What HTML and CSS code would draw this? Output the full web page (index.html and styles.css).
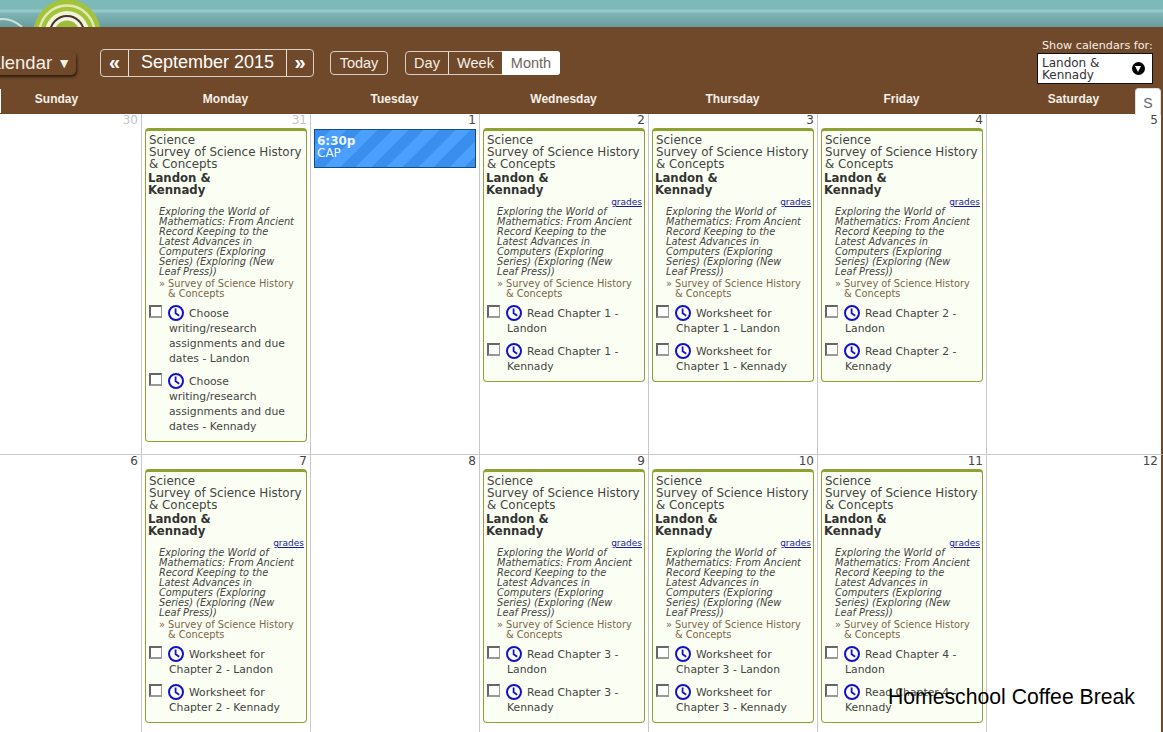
FILE: index.html
```html
<!DOCTYPE html>
<html lang="en">
<head>
<meta charset="utf-8">
<title>Calendar</title>
<link rel="stylesheet" href="styles.css">
</head>
<body>
<svg class="defs" width="0" height="0" aria-hidden="true">
  <symbol id="clock" viewBox="0 0 16 16">
    <circle cx="8" cy="8" r="7" fill="#fff" stroke="#1111cc" stroke-width="2"/>
    <path d="M7.6 3.6V8.2L11.2 10.8" fill="none" stroke="#1111cc" stroke-width="1.8"/>
  </symbol>
</svg>
<div class="page">
  <header class="banner">
    <svg class="logo" width="120" height="27" viewBox="0 0 120 27" aria-hidden="true">
      <path d="M-4 20C6 17 14 20 22 27" fill="none" stroke="#cfe0dc" stroke-width="2"/>
      <circle cx="67" cy="33" r="33.5" fill="#a4c339"/>
      <circle cx="67" cy="33" r="27.5" fill="none" stroke="#dfeab5" stroke-width="2.5"/>
      <circle cx="67" cy="33" r="22" fill="#eef4d6"/>
      <circle cx="67" cy="33" r="17" fill="#f2f2e6" stroke="#4a3426" stroke-width="2"/>
      <circle cx="67" cy="33" r="12.5" fill="#9dbb3a"/>
    </svg>
  </header>
  <section class="toolbar">
    <div class="cal-btn">Calendar <span class="cal-caret">▼</span></div>
    <div class="group nav-group">
      <span class="seg seg-arrow">«</span>
      <span class="seg seg-month">September 2015</span>
      <span class="seg seg-arrow seg-next">»</span>
    </div>
    <div class="group today-group"><span class="seg seg-small seg-today">Today</span></div>
    <div class="group view-group">
      <span class="seg seg-small seg-day">Day</span>
      <span class="seg seg-small seg-week">Week</span>
      <span class="seg seg-small seg-active">Month</span>
    </div>
    <div class="show-for">
      <div class="show-label">Show calendars for:</div>
      <div class="select">
        <span class="select-text">Landon &amp; Kennady</span>
        <span class="select-arrow"></span>
      </div>
    </div>
  </section>
  <div class="days">
    <div class="day">Sunday</div>
    <div class="day">Monday</div>
    <div class="day">Tuesday</div>
    <div class="day">Wednesday</div>
    <div class="day">Thursday</div>
    <div class="day">Friday</div>
    <div class="day">Saturday</div>
  </div>
  <span class="left-tick"></span>
  <span class="tab">S</span>
  <main class="grid">
    <div class="cell row-one"><div class="num muted">30</div></div>
    <div class="cell row-one">
      <div class="num muted">31</div>
      <article class="card">
        <div class="subject">Science<br>Survey of Science History &amp; Concepts</div>
        <div class="kids">Landon &amp; Kennady</div>
        <div class="book">Exploring the World of Mathematics: From Ancient Record Keeping to the Latest Advances in Computers (Exploring Series) (Exploring (New Leaf Press))</div>
        <div class="course">» Survey of Science History &amp; Concepts</div>
        <div class="task"><span class="check"></span><svg class="clock"><use href="#clock"/></svg>Choose writing/research assignments and due dates - Landon</div>
        <div class="task"><span class="check"></span><svg class="clock"><use href="#clock"/></svg>Choose writing/research assignments and due dates - Kennady</div>
      </article>
    </div>
    <div class="cell row-one">
      <div class="num">1</div>
      <div class="event"><b>6:30p</b><br>CAP</div>
    </div>
    <div class="cell row-one">
      <div class="num">2</div>
      <article class="card">
        <a class="grades" href="#">grades</a>
        <div class="subject">Science<br>Survey of Science History &amp; Concepts</div>
        <div class="kids">Landon &amp; Kennady</div>
        <div class="book">Exploring the World of Mathematics: From Ancient Record Keeping to the Latest Advances in Computers (Exploring Series) (Exploring (New Leaf Press))</div>
        <div class="course">» Survey of Science History &amp; Concepts</div>
        <div class="task"><span class="check"></span><svg class="clock"><use href="#clock"/></svg>Read Chapter 1 - Landon</div>
        <div class="task"><span class="check"></span><svg class="clock"><use href="#clock"/></svg>Read Chapter 1 - Kennady</div>
      </article>
    </div>
    <div class="cell row-one">
      <div class="num">3</div>
      <article class="card">
        <a class="grades" href="#">grades</a>
        <div class="subject">Science<br>Survey of Science History &amp; Concepts</div>
        <div class="kids">Landon &amp; Kennady</div>
        <div class="book">Exploring the World of Mathematics: From Ancient Record Keeping to the Latest Advances in Computers (Exploring Series) (Exploring (New Leaf Press))</div>
        <div class="course">» Survey of Science History &amp; Concepts</div>
        <div class="task"><span class="check"></span><svg class="clock"><use href="#clock"/></svg>Worksheet for Chapter 1 - Landon</div>
        <div class="task"><span class="check"></span><svg class="clock"><use href="#clock"/></svg>Worksheet for Chapter 1 - Kennady</div>
      </article>
    </div>
    <div class="cell row-one">
      <div class="num">4</div>
      <article class="card">
        <a class="grades" href="#">grades</a>
        <div class="subject">Science<br>Survey of Science History &amp; Concepts</div>
        <div class="kids">Landon &amp; Kennady</div>
        <div class="book">Exploring the World of Mathematics: From Ancient Record Keeping to the Latest Advances in Computers (Exploring Series) (Exploring (New Leaf Press))</div>
        <div class="course">» Survey of Science History &amp; Concepts</div>
        <div class="task"><span class="check"></span><svg class="clock"><use href="#clock"/></svg>Read Chapter 2 - Landon</div>
        <div class="task"><span class="check"></span><svg class="clock"><use href="#clock"/></svg>Read Chapter 2 - Kennady</div>
      </article>
    </div>
    <div class="cell row-one"><div class="num">5</div></div>

    <div class="cell row-two"><div class="num">6</div></div>
    <div class="cell row-two">
      <div class="num">7</div>
      <article class="card">
        <a class="grades" href="#">grades</a>
        <div class="subject">Science<br>Survey of Science History &amp; Concepts</div>
        <div class="kids">Landon &amp; Kennady</div>
        <div class="book">Exploring the World of Mathematics: From Ancient Record Keeping to the Latest Advances in Computers (Exploring Series) (Exploring (New Leaf Press))</div>
        <div class="course">» Survey of Science History &amp; Concepts</div>
        <div class="task"><span class="check"></span><svg class="clock"><use href="#clock"/></svg>Worksheet for Chapter 2 - Landon</div>
        <div class="task"><span class="check"></span><svg class="clock"><use href="#clock"/></svg>Worksheet for Chapter 2 - Kennady</div>
      </article>
    </div>
    <div class="cell row-two"><div class="num">8</div></div>
    <div class="cell row-two">
      <div class="num">9</div>
      <article class="card">
        <a class="grades" href="#">grades</a>
        <div class="subject">Science<br>Survey of Science History &amp; Concepts</div>
        <div class="kids">Landon &amp; Kennady</div>
        <div class="book">Exploring the World of Mathematics: From Ancient Record Keeping to the Latest Advances in Computers (Exploring Series) (Exploring (New Leaf Press))</div>
        <div class="course">» Survey of Science History &amp; Concepts</div>
        <div class="task"><span class="check"></span><svg class="clock"><use href="#clock"/></svg>Read Chapter 3 - Landon</div>
        <div class="task"><span class="check"></span><svg class="clock"><use href="#clock"/></svg>Read Chapter 3 - Kennady</div>
      </article>
    </div>
    <div class="cell row-two">
      <div class="num">10</div>
      <article class="card">
        <a class="grades" href="#">grades</a>
        <div class="subject">Science<br>Survey of Science History &amp; Concepts</div>
        <div class="kids">Landon &amp; Kennady</div>
        <div class="book">Exploring the World of Mathematics: From Ancient Record Keeping to the Latest Advances in Computers (Exploring Series) (Exploring (New Leaf Press))</div>
        <div class="course">» Survey of Science History &amp; Concepts</div>
        <div class="task"><span class="check"></span><svg class="clock"><use href="#clock"/></svg>Worksheet for Chapter 3 - Landon</div>
        <div class="task"><span class="check"></span><svg class="clock"><use href="#clock"/></svg>Worksheet for Chapter 3 - Kennady</div>
      </article>
    </div>
    <div class="cell row-two">
      <div class="num">11</div>
      <article class="card">
        <a class="grades" href="#">grades</a>
        <div class="subject">Science<br>Survey of Science History &amp; Concepts</div>
        <div class="kids">Landon &amp; Kennady</div>
        <div class="book">Exploring the World of Mathematics: From Ancient Record Keeping to the Latest Advances in Computers (Exploring Series) (Exploring (New Leaf Press))</div>
        <div class="course">» Survey of Science History &amp; Concepts</div>
        <div class="task"><span class="check"></span><svg class="clock"><use href="#clock"/></svg>Read Chapter 4 - Landon</div>
        <div class="task"><span class="check"></span><svg class="clock"><use href="#clock"/></svg>Read Chapter 4 - Kennady</div>
      </article>
    </div>
    <div class="cell row-two"><div class="num">12</div></div>
  </main>
  <div class="watermark">Homeschool Coffee Break</div>
</div>
</body>
</html>
```
FILE: styles.css
```css
* { box-sizing: border-box; }
html, body { margin: 0; padding: 0; background: #fff; }
body { overflow: hidden; }
.defs { position: absolute; }
.page {
  position: relative;
  width: 1163px;
  height: 732px;
  overflow: hidden;
  font-family: "DejaVu Sans", Verdana, sans-serif;
  background: #fff;
}
.banner {
  position: relative;
  height: 27px;
  background: linear-gradient(#7db9b9 0, #7db9b9 9px, #97c8c8 10px, #97c8c8 12px, #7fb5b6 13px, #6a9c9d 27px);
}
.logo { position: absolute; left: 0; top: 0; }
.toolbar {
  position: relative;
  display: flex;
  align-items: flex-start;
  height: 60px;
  background: #70492b;
  font-family: "Liberation Sans", Arial, sans-serif;
  color: #fff;
}
.cal-btn {
  margin: 24px 0 0 -40px;
  width: 116px;
  height: 24px;
  padding-left: 17px;
  line-height: 24px;
  font-size: 18.5px;
  color: #f5efe6;
  background: #70492b;
  border-radius: 5px;
  box-shadow: 1px 2px 3px #2e1a0c;
  white-space: nowrap;
}
.cal-caret { font-size: 14px; vertical-align: 1px; }
.group { display: flex; }
.nav-group {
  margin: 22px 0 0 24px;
  height: 28px;
  border: 1px solid #d8cfc4;
  border-radius: 4px;
}
.seg { display: block; text-align: center; }
.seg-arrow { width: 27px; font-size: 20px; font-weight: bold; line-height: 24px; }
.seg-next { width: 26px; }
.seg-month {
  width: 159px;
  font-size: 18px;
  line-height: 25px;
  border-left: 1px solid #e8e0d6;
  border-right: 1px solid #e8e0d6;
}
.today-group {
  margin: 24px 0 0 16px;
  height: 24px;
  border: 1px solid #d8cfc4;
  border-radius: 4px;
}
.seg-small { font-size: 14.5px; line-height: 22px; padding: 0 8px; color: #f5efe6; }
.seg-today { width: 56px; padding: 0; }
.view-group {
  margin: 24px 0 0 17px;
  height: 24px;
  border: 1px solid #d8cfc4;
  border-radius: 4px;
}
.seg-day { width: 43px; padding: 0; border-right: 1px solid #e8e0d6; }
.seg-week { width: 53px; padding: 0; }
.seg-active {
  width: 58px;
  padding: 0;
  background: #fff;
  color: #6e6560;
  border-radius: 0 3px 3px 0;
  margin: -1px -1px -1px 0;
  line-height: 24px;
}
.show-for { margin: 13px 10px 0 auto; width: 116px; }
.show-label {
  font-family: "DejaVu Sans", Verdana, sans-serif;
  font-size: 11.2px;
  line-height: 12px;
  white-space: nowrap;
  color: #f5efe6;
  margin-left: 5px;
}
.select {
  display: flex;
  align-items: center;
  width: 116px;
  height: 31px;
  padding: 0 7px 0 4px;
  margin-top: 1px;
  background: #fff;
  border: 1px solid #111;
  font-family: "DejaVu Sans", Verdana, sans-serif;
  font-size: 12px;
  line-height: 12px;
  color: #333;
}
.select-text { width: 80px; }
.select-arrow {
  position: relative;
  width: 13px;
  height: 13px;
  margin-left: auto;
  border-radius: 50%;
  background: #000;
}
.select-arrow::after {
  content: "";
  position: absolute;
  left: 3px;
  top: 4px;
  border-left: 3.5px solid transparent;
  border-right: 3.5px solid transparent;
  border-top: 6px solid #fff;
}
.days {
  display: grid;
  grid-template-columns: repeat(6, 169px) 175px;
  margin-left: -28px;
  width: 1191px;
  height: 27px;
  background: #70492b;
}
.day {
  font-family: "Liberation Sans", Arial, sans-serif;
  font-size: 12px;
  font-weight: bold;
  line-height: 25px;
  text-align: center;
  color: #f5efe6;
}
.left-tick {
  position: absolute;
  left: 0;
  top: 89px;
  width: 1px;
  height: 24px;
  background: #fff;
}
.tab {
  position: absolute;
  left: 1135px;
  top: 88px;
  width: 26px;
  height: 27px;
  padding-top: 6px;
  text-align: center;
  font-family: "Liberation Sans", Arial, sans-serif;
  font-size: 14px;
  line-height: 16px;
  color: #666;
  background: #fff;
  border: 1px solid #ddd;
  border-bottom: 0;
  border-radius: 4px 4px 0 0;
}
.grid {
  display: grid;
  grid-template-columns: repeat(6, 169px) 176px;
  grid-template-rows: 341px 300px;
  margin-left: -27px;
  width: 1190px;
}
.cell {
  position: relative;
  border-right: 1px solid #c8c8c8;
  border-bottom: 1px solid #c8c8c8;
  padding: 0 3px 0 3px;
}
.cell:nth-child(7n) { border-right: 2px solid #70492b; }
.row-two { border-bottom: 0; }
.num {
  height: 14px;
  text-align: right;
  font-size: 12px;
  line-height: 13px;
  color: #444;
}
.muted { color: #c4c4c4; }
.card {
  position: relative;
  width: 162px;
  padding: 3px 3px 7px 3px;
  background: #fbfff3;
  border: 1px solid #8ea232;
  border-top-width: 3px;
  border-radius: 4px;
  font-size: 12px;
  line-height: 12px;
  color: #333;
}
.subject { color: #444; font-size: 11.9px; }
.kids { margin: 2px 0 0 -1px; font-size: 11.7px; font-weight: bold; color: #333; width: 90px; }
.book {
  width: 139px;
  margin: 11px 0 0 10px;
  font-size: 9.8px;
  line-height: 10px;
  font-style: italic;
  color: #444;
}
.course {
  margin: 2px 0 0 10px;
  padding-left: 9px;
  text-indent: -9px;
  font-size: 9.8px;
  line-height: 10px;
  color: #7a6648;
}
.grades {
  position: absolute;
  right: 2px;
  top: 66px;
  font-size: 9px;
  line-height: 10px;
  color: #1a1a99;
  text-decoration: underline;
}
.task {
  margin-top: 7px;
  padding-left: 20px;
  text-indent: -20px;
  font-size: 10.8px;
  line-height: 15px;
  color: #444;
}
.course + .task { margin-top: 6px; }
.check {
  display: inline-block;
  width: 13px;
  height: 13px;
  margin-right: 6px;
  vertical-align: -1px;
  background: #fff;
  border: 2px solid #777;
  border-right-width: 1px;
  border-color: #666 #999 #999 #666;
}
.clock {
  display: inline-block;
  width: 16px;
  height: 16px;
  margin: 0 5px 0 0;
  vertical-align: -4px;
}
.event {
  width: 162px;
  height: 39px;
  margin-top: 1px;
  padding: 5px 3px 0 2px;
  border: 1px solid #134c80;
  color: #eef6ff;
  font-size: 12px;
  line-height: 12px;
  background: repeating-linear-gradient(135deg, #3a8eee 0 11px, #4ba0ff 11px 22px);
}
.watermark {
  position: absolute;
  left: 888px;
  top: 685px;
  font-family: "Liberation Sans", Arial, sans-serif;
  font-size: 21.2px;
  line-height: 24px;
  color: #000;
  white-space: nowrap;
}
```
